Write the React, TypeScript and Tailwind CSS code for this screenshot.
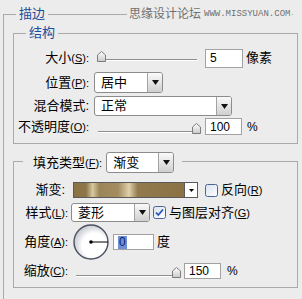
import React from 'react';

const Mn: React.FC<{ k: string; colon?: boolean }> = ({ k, colon = true }) => (
  <span className="text-[11px]">
    (<span className="underline">{k}</span>){colon ? ':' : ''}
  </span>
);

const Arrow: React.FC<{ small?: boolean }> = ({ small }) =>
  small ? (
    <svg width="5" height="3" viewBox="0 0 5 3">
      <path d="M0 0H5L2.5 3Z" fill="#000" />
    </svg>
  ) : (
    <svg width="7" height="5" viewBox="0 0 7 5">
      <path d="M0 0H7L3.5 5Z" fill="#111" />
    </svg>
  );

const Select: React.FC<{ size: string; text: string }> = ({ size, text }) => (
  <div className={`flex ${size} bg-white border border-[#8c8c8c] rounded-[3px]`}>
    <span className="flex-1 pl-[6px] flex items-center">{text}</span>
    <span className="w-[15px] flex items-center justify-center border-l border-[#a3a3a3] rounded-r-[2px] bg-gradient-to-b from-[#fafafa] to-[#cfcfcf]">
      <Arrow />
    </span>
  </div>
);

const Field: React.FC<{ size: string; value: string; selected?: boolean }> = ({ size, value, selected }) => (
  <div className={`flex items-center ${size} bg-white border border-[#a2a2a2] pl-[4px] text-[12px] font-['Liberation_Sans',sans-serif]`}>
    {selected ? <span className="bg-[#6f8fd4] text-[#0d2366] leading-[13px] px-px">{value}</span> : value}
  </div>
);

// slider drawing: track + house shaped thumb
const Slider: React.FC<{ w: number; h: number; thumb: number; track: number }> = ({ w, h, thumb, track }) => {
  const top = track - 8;
  return (
    <svg width={w} height={h} viewBox={`0 0 ${w} ${h}`}>
      <defs>
        <linearGradient id="thumbFill" x1="0" y1="0" x2="0" y2="1">
          <stop offset="0" stopColor="#ffffff" />
          <stop offset="1" stopColor="#c9c9c9" />
        </linearGradient>
      </defs>
      <line x1="0" y1={track + 0.5} x2={w} y2={track + 0.5} stroke="#8e8e8e" />
      <line x1="0" y1={track + 1.5} x2={w} y2={track + 1.5} stroke="#ffffff" />
      <path
        d={`M${thumb + 0.5} ${top + 10.5}V${top + 4}L${thumb + 4.5} ${top + 0.5}L${thumb + 8.5} ${top + 4}V${top + 10.5}Z`}
        fill="url(#thumbFill)"
        stroke="#7c7c7c"
      />
    </svg>
  );
};

const Check: React.FC<{ checked?: boolean }> = ({ checked }) => (
  <svg width="13" height="13" viewBox="0 0 13 13">
    <defs>
      <linearGradient id="boxFill" x1="0" y1="0" x2="1" y2="1">
        <stop offset="0" stopColor="#d9e2ee" />
        <stop offset="1" stopColor="#ffffff" />
      </linearGradient>
    </defs>
    <rect x="0.5" y="0.5" width="12" height="12" rx="2" fill="url(#boxFill)" stroke="#4a6690" />
    {checked && <path d="M3 6.5L5.3 9L10 3.5" fill="none" stroke="#2457b0" strokeWidth="1.8" />}
  </svg>
);

const AngleDial = () => (
  <svg width="36" height="36" viewBox="0 0 36 36">
    <defs>
      <radialGradient id="dial" cx="0.6" cy="0.6" r="0.6">
        <stop offset="0.6" stopColor="#ffffff" />
        <stop offset="1" stopColor="#c9ccd3" />
      </radialGradient>
    </defs>
    <circle cx="18" cy="18" r="17" fill="url(#dial)" stroke="#4b5262" strokeWidth="1.4" />
    <circle cx="18" cy="18" r="1.8" fill="#000" />
    <line x1="18" y1="18" x2="35" y2="18" stroke="#000" strokeWidth="1" />
  </svg>
);

export default function App() {
  return (
    <div className="w-[302px] h-[299px] overflow-hidden bg-[#ececec] text-black text-[13px] leading-[16px] font-['Liberation_Sans','Noto_Sans_CJK_SC',sans-serif]">
      <div className="relative ml-[3px] mt-[14px] w-[290px] h-[285px] border-l border-t border-[#aaaaaa]">
        <span className="absolute -top-[9px] left-[12px] px-[3px] bg-[#ececec] text-[#1d4d9b]">描边</span>
        <span className="absolute -top-[9px] left-[123px] pl-[2px] pr-[2px] bg-[#ececec] flex items-center gap-[3px] whitespace-nowrap text-[#707070]">
          <span className="text-[12px]">思缘设计论坛</span>
          <span className="text-[9px] font-['Liberation_Mono',monospace]">WWW.MISSYUAN.COM</span>
        </span>

        {/* 结构 */}
        <div className="relative ml-[9px] mt-[18px] w-[285px] h-[111px] border border-[#aaaaaa]">
          <span className="absolute -top-[9px] left-[12px] px-[3px] bg-[#ececec] text-[#1d4d9b]">结构</span>

          <div className="flex items-center h-[20px] mt-[14px]">
            <span className="w-[75px] text-right">大小<Mn k="S" /></span>
            <span className="ml-[8px] flex"><Slider w={100} h={20} thumb={0} track={11} /></span>
            <Field size="ml-[8px] w-[38px] h-[19px]" value="5" />
            <span className="ml-[3px]">像素</span>
          </div>

          <div className="flex items-center h-[21px] mt-[4px]">
            <span className="w-[75px] text-right">位置<Mn k="P" /></span>
            <Select size="ml-[5px] w-[69px] h-[21px]" text="居中" />
          </div>

          <div className="flex items-center h-[20px] mt-[3px]">
            <span className="w-[75px] text-right">混合模式:</span>
            <Select size="ml-[5px] w-[138px] h-[20px]" text="正常" />
          </div>

          <div className="flex items-center h-[17px] mt-[2px]">
            <span className="w-[75px] text-right whitespace-nowrap">不透明度<Mn k="O" /></span>
            <span className="ml-[9px] flex"><Slider w={103} h={17} thumb={94} track={13} /></span>
            <Field size="ml-[4px] w-[37px] h-[17px]" value="100" />
            <span className="ml-[5px] text-[12px]">%</span>
          </div>
        </div>

        {/* 填充 */}
        <div className="relative ml-[9px] mt-[17px] w-[285px] h-[127px] border border-[#aaaaaa]">
          <div className="absolute -top-[10px] left-[9px] h-[21px] pl-[10px] pr-[8px] bg-[#ececec] flex items-center">
            <span className="whitespace-nowrap">填充类型<Mn k="F" /></span>
            <Select size="ml-[4px] w-[68px] h-[21px]" text="渐变" />
          </div>

          <div className="flex items-center h-[16px] mt-[20px]">
            <span className="w-[51px] text-right">渐变:</span>
            <div className="ml-[8px] w-[125px] h-[16px] flex border border-[#5a5a5a] bg-white">
              <div className="flex-1 border-r border-[#5a5a5a] bg-[linear-gradient(90deg,#8a7245_0%,#8e764a_11%,#d8c9a1_17%,#9c8659_23%,#a38c5f_40%,#ded1ac_50%,#927a4c_58%,#8a7245_100%)]" />
              <div className="w-[12px] flex items-center justify-center">
                <Arrow small />
              </div>
            </div>
            <span className="ml-[7px] flex"><Check /></span>
            <span className="ml-[3px]">反向<Mn k="R" colon={false} /></span>
          </div>

          <div className="flex items-center h-[19px] mt-[5px]">
            <span className="w-[54px] text-right">样式<Mn k="L" /></span>
            <Select size="ml-[3px] w-[79px] h-[19px]" text="菱形" />
            <span className="ml-[3px] flex"><Check checked /></span>
            <span className="ml-[3px]">与图层对齐<Mn k="G" colon={false} /></span>
          </div>

          <div className="flex items-center h-[36px] mt-[2px]">
            <span className="w-[54px] text-right">角度<Mn k="A" /></span>
            <span className="ml-[5px] flex"><AngleDial /></span>
            <Field size="ml-[4px] w-[41px] h-[16px]" value="0" selected />
            <span className="ml-[3px]">度</span>
          </div>

          <div className="flex items-center h-[16px] mt-[3px]">
            <span className="w-[54px] text-right">缩放<Mn k="C" /></span>
            <span className="ml-[8px] flex"><Slider w={105} h={16} thumb={96} track={12} /></span>
            <Field size="ml-[3px] w-[37px] h-[16px]" value="150" />
            <span className="ml-[6px] text-[12px]">%</span>
          </div>
        </div>
      </div>
    </div>
  );
}
